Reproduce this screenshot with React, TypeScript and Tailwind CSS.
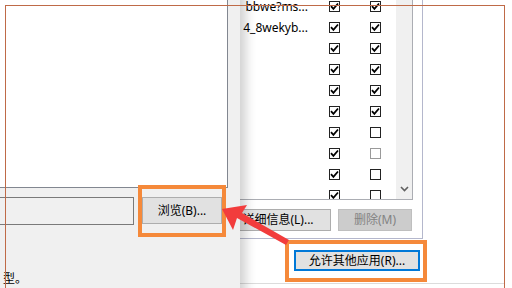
const rows = [
  { name: 'bbwe?ms...', a: true, b: true },
  { name: '4_8wekyb...', a: true, b: true },
  { name: '', a: true, b: true },
  { name: '', a: true, b: true },
  { name: '', a: true, b: true },
  { name: '', a: true, b: true },
  { name: '', a: true, b: false },
  { name: '', a: true, b: false, dim: true },
  { name: '', a: true, b: false },
  { name: '', a: true, b: false },
]

function Check({ on, dim }: { on: boolean; dim?: boolean }) {
  return (
    <span
      className={`flex h-[11px] w-[11px] items-center justify-center border bg-white ${
        dim ? 'border-[#9a9a9a]' : 'border-[#222]'
      }`}
    >
      {on && (
        <svg width="9" height="9" viewBox="0 0 9 9">
          <path d="M1 4.2 L3.4 6.8 L8 1.5" fill="none" stroke="#000" strokeWidth="1.8" />
        </svg>
      )}
    </span>
  )
}

export default function App() {
  return (
    <div className="relative h-[288px] w-[512px] overflow-hidden bg-white font-['Noto_Sans','Noto_Sans_CJK_SC',sans-serif] text-[12px] leading-none text-black">
      {/* back window: allowed apps */}
      <div className="absolute left-[100px] top-[-4px] flex w-[405px] flex-col">
        <div className="flex w-[323px] flex-col border-r border-b border-[#b4b7cc] pb-[7px]">
          <div className="flex h-[204px] w-[313px] border-r border-b border-[#abadb3] bg-white">
            <div className="flex flex-1 flex-col overflow-hidden">
              {rows.map((r, i) => (
                <div key={i} className="flex h-[21px] shrink-0 items-center">
                  <div className="w-[210px] whitespace-nowrap pr-[2px] text-right">{r.name}</div>
                  <div className="flex w-[48px] justify-center">
                    <Check on={r.a} />
                  </div>
                  <div className="flex w-[34px] justify-center">
                    <Check on={r.b} dim={r.dim} />
                  </div>
                </div>
              ))}
            </div>
            <div className="flex w-[16px] flex-col justify-end bg-[#f0f0f0] pb-[7px]">
              <svg className="mx-auto" width="9" height="6" viewBox="0 0 9 6">
                <path d="M1 1 L4.5 4.5 L8 1" fill="none" stroke="#606060" strokeWidth="1.6" />
              </svg>
            </div>
          </div>
          <div className="mt-[9px] flex justify-end gap-[7px] pr-[10px]">
            <div className="flex h-[22px] w-[106px] items-center justify-center border border-[#adadad] bg-[#e1e1e1]">
              详细信息(L)...
            </div>
            <div className="flex h-[22px] w-[74px] items-center justify-center border border-[#bfbfbf] bg-[#cccccc] text-[#838383]">
              删除(M)
            </div>
          </div>
        </div>
        <div className="mt-[11px] flex w-[323px] justify-end pr-[3px]">
          <div className="flex h-[21px] w-[126px] items-center justify-center border-2 border-[#0078d7] bg-[#e1e1e1]">
            允许其他应用(R)...
          </div>
        </div>
        <div className="mt-[12px] border-t border-[#dcdcdc]" />
      </div>

      {/* front dialog */}
      <div className="absolute left-[-10px] top-[-10px] flex h-[310px] w-[250px] flex-col bg-[#f0f0f0] shadow-[6px_0_10px_rgba(0,0,0,0.18)]">
        <div className="h-[198px] w-[238px] border-r border-b border-[#828790] bg-white" />
        <div className="mt-[9px] flex items-start">
          <div className="h-[28px] w-[144px] border border-[#7a7a7a] bg-[#f0f0f0]" />
          <div className="ml-[8px] flex h-[27px] w-[80px] items-center justify-center border border-[#adadad] bg-[#e1e1e1]">
            浏览(B)...
          </div>
        </div>
        <div className="ml-[13px] mt-[46px] leading-[16px]">型。</div>
      </div>

      {/* annotations */}
      <div className="pointer-events-none absolute left-[5px] top-[5px] h-[300px] w-[500px] border border-[#bf6a47]" />
      <div className="pointer-events-none absolute left-[138px] top-[185px] h-[52px] w-[88px] border-4 border-[#f5893a]" />
      <div className="pointer-events-none absolute left-[285px] top-[240px] h-[42px] w-[142px] border-4 border-[#f5893a]" />
      <svg className="pointer-events-none absolute left-0 top-0" width="512" height="288">
        <polygon points="222,209 247,205 242,213 289,240 286,245 237,218 233,230" fill="#f23c3c" />
      </svg>
    </div>
  )
}
